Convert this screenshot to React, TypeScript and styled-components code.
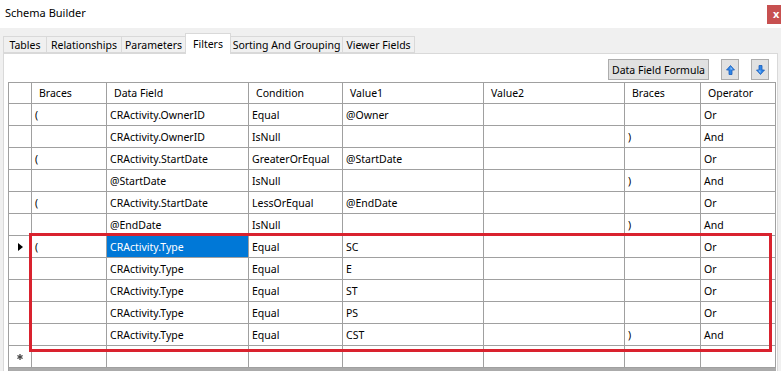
import React from "react";
import styled, { createGlobalStyle } from "styled-components";

const Global = createGlobalStyle`
  html, body { margin: 0; padding: 0; background: #f0f0f0; }
  body { font-family: "Noto Sans", "Liberation Sans", sans-serif; font-size: 10.5px; color: #000; }
  * { box-sizing: border-box; }
`;

const COLS = [23, 75, 142, 94, 141, 141, 76, 75];
const GRID_COLS = COLS.map((c) => `${c}px`).join(" ");

const Window = styled.div`
  width: 781px;
  height: 371px;
  overflow: hidden;
  display: flex;
  flex-direction: column;
  background: #f0f0f0;
`;

const TitleBar = styled.div`
  flex: none;
  height: 28px;
  background: #ffffff;
  display: flex;
  justify-content: space-between;
  align-items: flex-start;
`;

const Title = styled.div`
  padding: 5px 0 0 5px;
  font-size: 11px;
  line-height: 15px;
`;

const CloseBox = styled.div`
  margin-top: 5px;
  width: 14px;
  height: 19px;
  background: #c75050;
  color: #ffffff;
  font-size: 11px;
  font-weight: bold;
  line-height: 17px;
  padding-left: 6px;
`;

const Body = styled.div`
  flex: 1;
  min-height: 0;
  display: flex;
  flex-direction: column;
  padding: 5px 3px 0 3px;
`;

const TabStrip = styled.div`
  flex: none;
  height: 20px;
  display: flex;
  align-items: flex-end;
  position: relative;
  z-index: 1;
`;

const Tab = styled.div<{ $w: number; $active?: boolean }>`
  width: ${(p) => p.$w}px;
  height: ${(p) => (p.$active ? 21 : 17)}px;
  margin-bottom: ${(p) => (p.$active ? -1 : 0)}px;
  margin-left: -1px;
  &:first-child { margin-left: 0; }
  border: 1px solid #d9d9d9;
  border-bottom: ${(p) => (p.$active ? "none" : "1px solid #d9d9d9")};
  background: ${(p) => (p.$active ? "#ffffff" : "#f0f0f0")};
  display: flex;
  align-items: center;
  justify-content: center;
  white-space: nowrap;
`;

const Panel = styled.div`
  flex: 1;
  min-height: 0;
  background: #ffffff;
  border: 1px solid #d9d9d9;
  border-bottom: none;
  display: flex;
  flex-direction: column;
`;

const Toolbar = styled.div`
  flex: none;
  display: flex;
  justify-content: flex-end;
  gap: 12px;
  padding: 5px 8px 2px 0;
`;

const Button = styled.div<{ $w: number }>`
  width: ${(p) => p.$w}px;
  height: 21px;
  background: #e1e1e1;
  border: 1px solid #adadad;
  display: flex;
  align-items: center;
  justify-content: center;
  white-space: nowrap;
`;

const GridFrame = styled.div`
  flex: 1;
  margin-left: 4px;
  width: 768px;
  background: #ababab;
  border-left: 1px solid #a0a0a0;
  border-top: 1px solid #a0a0a0;
  position: relative;
`;

const Row = styled.div`
  display: grid;
  grid-template-columns: ${GRID_COLS};
  background: #ffffff;
`;

const Cell = styled.div<{ $header?: boolean; $selected?: boolean }>`
  height: ${(p) => (p.$header ? 21 : 22)}px;
  border-right: 1px solid #a0a0a0;
  border-bottom: 1px solid #a0a0a0;
  padding-left: ${(p) => (p.$header ? 7 : 3)}px;
  display: flex;
  align-items: center;
  white-space: nowrap;
  overflow: hidden;
  background: ${(p) => (p.$selected ? "#0078d7" : "#ffffff")};
  color: ${(p) => (p.$selected ? "#ffffff" : "#000000")};
`;

const RowHead = styled.div`
  border-right: 1px solid #a0a0a0;
  border-bottom: 1px solid #a0a0a0;
  display: flex;
  align-items: center;
  justify-content: center;
  background: #ffffff;
`;

const Highlight = styled.div`
  position: absolute;
  left: 20px;
  top: 150px;
  width: 743px;
  height: 119px;
  border: 3px solid #d9222e;
  pointer-events: none;
`;

const Arrow = ({ down }: { down?: boolean }) => (
  <svg width="9" height="10" viewBox="0 0 9 10">
    <g transform={down ? "rotate(180 4.5 5)" : undefined}>
      <polygon
        points="4.5,0.5 8.5,5 6,5 6,9.5 3,9.5 3,5 0.5,5"
        fill="#2f86e8"
        stroke="#1a5cb8"
        strokeWidth="0.8"
        strokeLinejoin="round"
      />
      <polygon points="4.5,1.8 6.8,4.4 4.5,4.4" fill="#8cc4ff" />
    </g>
  </svg>
);

const CurrentMark = () => (
  <svg width="5" height="8" viewBox="0 0 5 8">
    <polygon points="0,0 5,4 0,8" fill="#000" />
  </svg>
);

const NewMark = () => (
  <svg width="6" height="6" viewBox="0 0 6 6">
    <g stroke="#444" strokeWidth="1.3">
      <line x1="3" y1="0" x2="3" y2="6" />
      <line x1="0.4" y1="1.5" x2="5.6" y2="4.5" />
      <line x1="0.4" y1="4.5" x2="5.6" y2="1.5" />
    </g>
  </svg>
);

const TABS: { label: string; w: number; active?: boolean }[] = [
  { label: "Tables", w: 44 },
  { label: "Relationships", w: 76 },
  { label: "Parameters", w: 65 },
  { label: "Filters", w: 46, active: true },
  { label: "Sorting And Grouping", w: 113 },
  { label: "Viewer Fields", w: 73 },
];

const HEADERS = ["Braces", "Data Field", "Condition", "Value1", "Value2", "Braces", "Operator"];

const ROWS: string[][] = [
  ["(", "CRActivity.OwnerID", "Equal", "@Owner", "", "", "Or"],
  ["", "CRActivity.OwnerID", "IsNull", "", "", ")", "And"],
  ["(", "CRActivity.StartDate", "GreaterOrEqual", "@StartDate", "", "", "Or"],
  ["", "@StartDate", "IsNull", "", "", ")", "And"],
  ["(", "CRActivity.StartDate", "LessOrEqual", "@EndDate", "", "", "Or"],
  ["", "@EndDate", "IsNull", "", "", ")", "And"],
  ["(", "CRActivity.Type", "Equal", "SC", "", "", "Or"],
  ["", "CRActivity.Type", "Equal", "E", "", "", "Or"],
  ["", "CRActivity.Type", "Equal", "ST", "", "", "Or"],
  ["", "CRActivity.Type", "Equal", "PS", "", "", "Or"],
  ["", "CRActivity.Type", "Equal", "CST", "", ")", "And"],
];

const CURRENT = 6;

export default function App() {
  return (
    <>
      <Global />
      <Window>
        <TitleBar>
          <Title>Schema Builder</Title>
          <CloseBox>x</CloseBox>
        </TitleBar>
        <Body>
          <TabStrip>
            {TABS.map((t) => (
              <Tab key={t.label} $w={t.w} $active={t.active}>
                {t.label}
              </Tab>
            ))}
          </TabStrip>
          <Panel>
            <Toolbar>
              <Button $w={101}>Data Field Formula</Button>
              <Button $w={18}>
                <Arrow />
              </Button>
              <Button $w={18}>
                <Arrow down />
              </Button>
            </Toolbar>
            <GridFrame>
              <Row>
                <RowHead />
                {HEADERS.map((h, i) => (
                  <Cell key={i} $header>
                    {h}
                  </Cell>
                ))}
              </Row>
              {ROWS.map((r, ri) => (
                <Row key={ri}>
                  <RowHead>{ri === CURRENT ? <CurrentMark /> : null}</RowHead>
                  {r.map((v, ci) => (
                    <Cell key={ci} $selected={ri === CURRENT && ci === 1}>
                      {v}
                    </Cell>
                  ))}
                </Row>
              ))}
              <Row>
                <RowHead>
                  <NewMark />
                </RowHead>
                {HEADERS.map((_, ci) => (
                  <Cell key={ci} />
                ))}
              </Row>
              <Highlight />
            </GridFrame>
          </Panel>
        </Body>
      </Window>
    </>
  );
}
